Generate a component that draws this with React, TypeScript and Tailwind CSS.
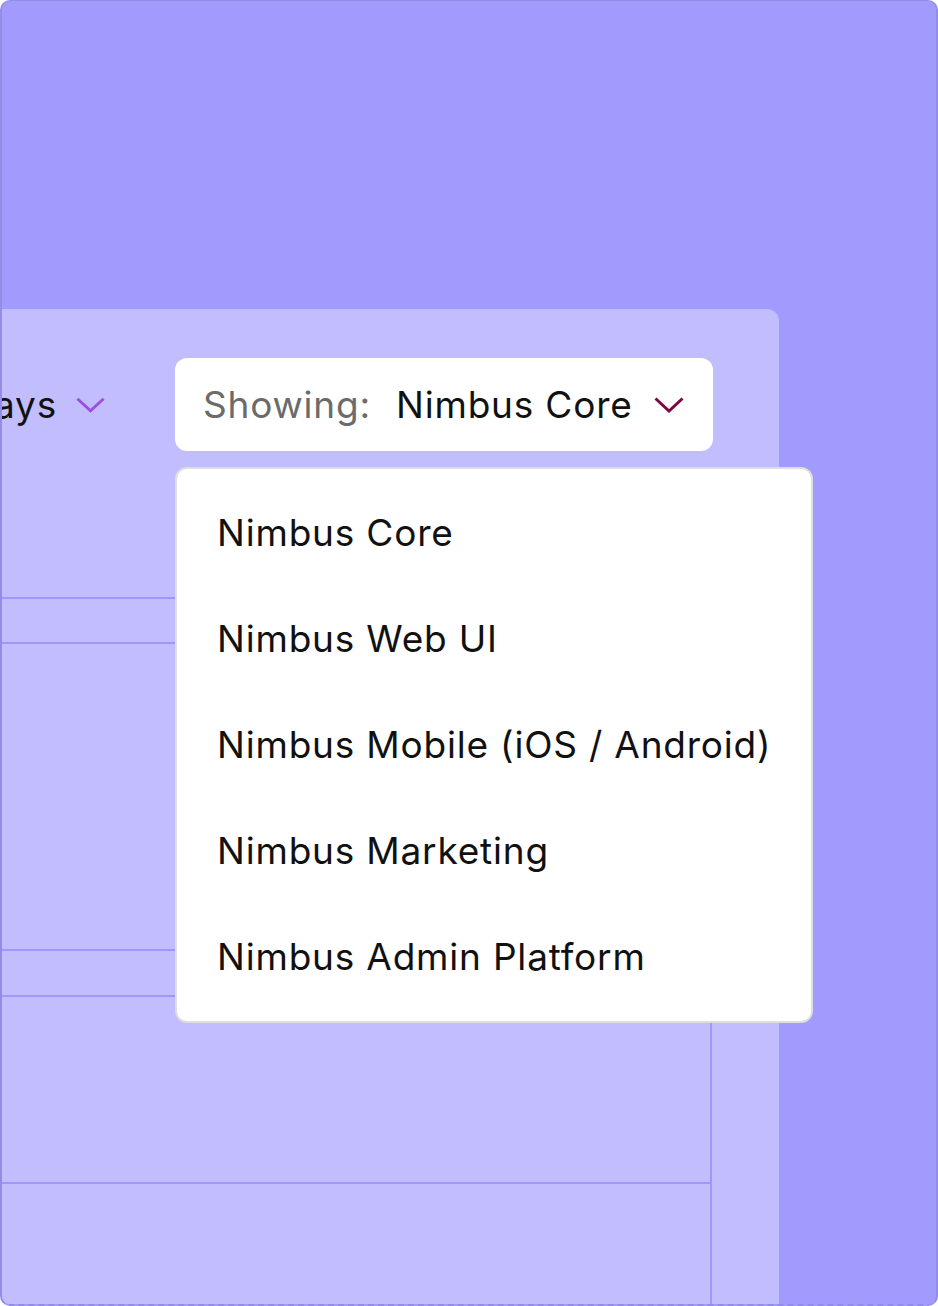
import React from "react";

const projects = [
  "Nimbus Core",
  "Nimbus Web UI",
  "Nimbus Mobile (iOS / Android)",
  "Nimbus Marketing",
  "Nimbus Admin Platform",
];

function Chevron({ className }: { className: string }) {
  return (
    <svg viewBox="0 0 30 16" className={className} fill="none">
      <polyline points="1.5,1.5 15,14 28.5,1.5" stroke="currentColor" strokeWidth="3" />
    </svg>
  );
}

export default function App() {
  return (
    <div className="w-[938px] h-[1306px] bg-white font-['Inter','Liberation_Sans',sans-serif]">
      <div className="w-full h-full rounded-[10px] border-x-2 border-t border-b-2 border-[#948de8] [border-bottom-style:dashed] bg-[#a29bfe] overflow-hidden">
        {/* Panel */}
        <div className="mt-[308px] ml-[-240px] w-[1017px] h-[1000px] bg-[#c2befe] rounded-tr-[12px]">
          {/* Header row */}
          <div className="flex items-center justify-end pt-[49px] pr-[66px] text-[37px] tracking-[0.8px]">
            <div className="flex items-center text-[#111]">
              <span>Last 30 days</span>
              <Chevron className="w-[29px] h-[16px] ml-[19px] text-[#9b4fe0]" />
            </div>
            <div className="relative ml-[70px]">
              <button className="flex items-center w-[538px] h-[93px] bg-white rounded-[12px] pl-[28px] pr-[26px] tracking-[0.8px]">
                <span className="text-[#6b6b6b]">Showing:</span>
                <span className="ml-[25px] text-[#111]">Nimbus Core</span>
                <Chevron className="w-[30px] h-[16px] ml-[21px] text-[#7b0a3f]" />
              </button>

              {/* Dropdown menu */}
              <div className="absolute left-0 top-full mt-[16px] w-[638px] z-10 bg-white border-2 border-[#dedede] rounded-[12px] py-[11px]">
                {projects.map((p) => (
                  <div key={p} className="h-[106px] flex items-center pl-[40px] text-[#111]">
                    {p}
                  </div>
                ))}
              </div>
            </div>
          </div>

          {/* Table grid */}
          <div className="mt-[146px] mr-[67px] border-r-2 border-[#9f98fc]">
            <div className="h-[45px] border-t-2 border-[#9f98fc]" />
            <div className="h-[307px] border-t-2 border-[#9f98fc]" />
            <div className="h-[46px] border-t-2 border-[#9f98fc]" />
            <div className="h-[187px] border-t-2 border-[#9f98fc]" />
            <div className="h-[200px] border-t-2 border-[#9f98fc]" />
          </div>
        </div>
      </div>
    </div>
  );
}
